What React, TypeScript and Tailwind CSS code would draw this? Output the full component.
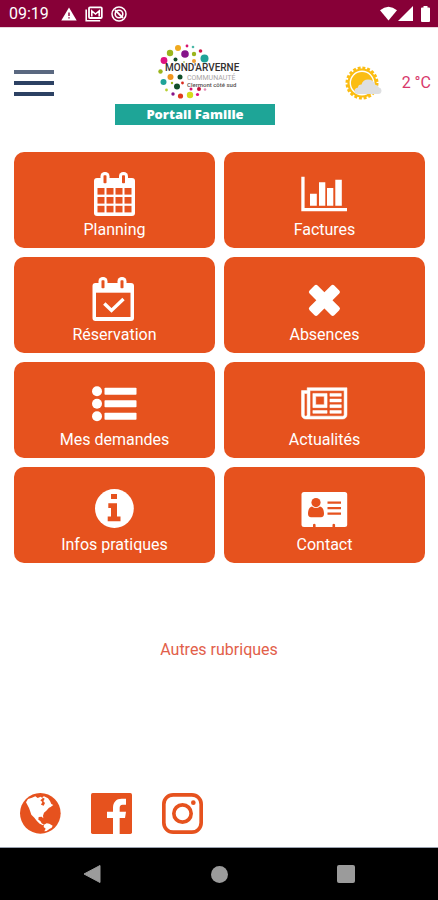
import type { ReactNode } from "react";

interface Tile {
  label: string;
  icon: ReactNode;
}

const ORANGE = "#e6521e";

// x, y, radius, colour of the confetti around the logo name
const dots: [number, number, number, string][] = [
  [63, 4, 3, "#f0a91e"],
  [72, 2, 1.4, "#d6136f"],
  [78, 3, 1.3, "#4cb8a8"],
  [55, 9, 3.2, "#9ab51c"],
  [70, 10, 3.8, "#86148a"],
  [79, 10, 2.2, "#9ab51c"],
  [85.5, 7, 1.8, "#cf1846"],
  [89.5, 14.5, 4, "#1fa398"],
  [49, 16.5, 3.4, "#de1180"],
  [60.5, 15.5, 2, "#12502a"],
  [79, 17, 2, "#f0a036"],
  [69, 18, 1, "#b7cf72"],
  [45.5, 27.5, 2.2, "#9ab51c"],
  [55.5, 33, 3, "#f0961e"],
  [65, 33, 2.5, "#12502a"],
  [48.5, 38, 3, "#1fa398"],
  [57, 39, 1.2, "#9ab51c"],
  [67.5, 39, 1.4, "#d92a1e"],
  [62, 42.5, 3, "#12502a"],
  [76, 45, 1.5, "#d6136f"],
  [84, 45, 2, "#c4123a"],
  [90, 45.5, 1.3, "#e38cb4"],
  [51.5, 46, 1.4, "#b7cf32"],
  [58, 50, 1.7, "#86148a"],
  [65.5, 52, 2.6, "#e03a1e"],
  [75, 51, 3.2, "#d5dc1c"],
  [82.5, 50.5, 1.6, "#de1180"],
];

function TileIcon({ children }: { children: ReactNode }) {
  return (
    <svg viewBox="0 0 48 48" className="size-12" fill="white" aria-hidden="true">
      {children}
    </svg>
  );
}

function PlanningIcon() {
  return (
    <TileIcon>
      <rect x="3" y="8" width="41" height="38" rx="3" />
      <rect x="9.5" y="2" width="9" height="14" rx="4.2" />
      <rect x="28" y="2" width="9" height="14" rx="4.2" />
      <g fill={ORANGE}>
        <rect x="12.5" y="5.3" width="3" height="8" rx="0.8" />
        <rect x="31" y="5.3" width="3" height="8" rx="0.8" />
        {[18, 27, 35.8].map((y) =>
          [6.5, 15.5, 24.5, 33.5].map((x) => <rect key={`${x}-${y}`} x={x} y={y} width="7" height="6.6" />)
        )}
      </g>
    </TileIcon>
  );
}

function ReservationIcon() {
  return (
    <TileIcon>
      <rect x="1.5" y="8" width="41.5" height="38" rx="3" />
      <rect x="7.5" y="2" width="9" height="14" rx="4.2" />
      <rect x="26.5" y="2" width="9" height="14" rx="4.2" />
      <g fill={ORANGE}>
        <rect x="10.5" y="5.3" width="3" height="8" rx="0.8" />
        <rect x="29.5" y="5.3" width="3" height="8" rx="0.8" />
        <rect x="5" y="17.7" width="34.5" height="24.3" />
      </g>
      <path d="M13.3 28.5l7.2 7L32.500 24" fill="none" stroke="white" strokeWidth="3.4" />
    </TileIcon>
  );
}

function FacturesIcon() {
  return (
    <TileIcon>
      <path d="M.3 6.7h3.3V38H46v3.3H.3z" />
      <path d="M9 23.7h6.800v12H9zM18 12.300h6.300v23.400H18zM26 18h6.300v17.700H26zM34.300 9.700h6.500v26h-6.500z" />
    </TileIcon>
  );
}

function AbsencesIcon() {
  return (
    <TileIcon>
      <g transform="translate(23.4 25.3)">
        <rect x="-17.5" y="-5.7" width="35" height="11.4" rx="2.2" transform="rotate(45)" />
        <rect x="-17.5" y="-5.7" width="35" height="11.4" rx="2.2" transform="rotate(-45)" />
      </g>
    </TileIcon>
  );
}

function DemandesIcon() {
  return (
    <TileIcon>
      {[11.3, 23.8, 36.3].map((y) => (
        <g key={y}>
          <circle cx="6" cy={y} r="5" />
          <rect x="13.5" y={y - 3.5} width="32" height="7" rx="0.8" />
        </g>
      ))}
    </TileIcon>
  );
}

function ActualitesIcon() {
  return (
    <TileIcon>
      <path
        transform="translate(.5 39) scale(.0222 -.0222)"
        d="M1024 1024h-384v-384h384v384zM1152 384v-128h-640v128h640zM1152 1152v-640h-640v640h640zM1792 384v-128h-512v128h512zM1792 640v-128h-512v128h512zM1792 896v-128h-512v128h512zM1792 1152v-128h-512v128h512zM256 192v960h-128v-960q0 -26 19 -45t45 -19t45 19t19 45zM1920 192v1088h-1536v-1088q0 -33 -11 -64h1483q26 0 45 19t19 45zM2048 1408v-1216q0 -80 -56 -136t-136 -56h-1664q-80 0 -136 56t-56 136v1088h256v128h1792z"
        fillRule="evenodd"
        stroke="white"
        strokeWidth="24"
      />
    </TileIcon>
  );
}

function InfosIcon() {
  return (
    <TileIcon>
      <circle cx="23.4" cy="23.5" r="19.4" />
      <path fill={ORANGE} d="M20 9h6v5h-6zM17.300 18.300H26v13.200h3.500v4.800H16.700v-4.800H20V23h-2.700z" />
    </TileIcon>
  );
}

function ContactIcon() {
  return (
    <TileIcon>
      <rect x=".5" y="7" width="45.700" height="35" rx="2.500" />
      <g fill={ORANGE}>
        <circle cx="15" cy="17.600" r="4.600" />
        <path d="M11 21.500q4 3 8 0c3 .4 4 4 4 7.300 0 2.200-1 3.500-3 3.500H10c-2 0-3-1.300-3-3.500 0-3.300 1-6.900 4-7.300z" />
        <path d="M26.500 16.500H40v2.200H26.500zM26.500 22H40v2.200H26.500zM26.500 27.500H40v2.200H26.500z" />
        <path d="M12 42v-2.500q1.300-1.400 2.600 0V42zM31.500 42v-2.500q1.300-1.400 2.600 0V42z" />
      </g>
    </TileIcon>
  );
}

const tiles: Tile[] = [
  { label: "Planning", icon: <PlanningIcon /> },
  { label: "Factures", icon: <FacturesIcon /> },
  { label: "Réservation", icon: <ReservationIcon /> },
  { label: "Absences", icon: <AbsencesIcon /> },
  { label: "Mes demandes", icon: <DemandesIcon /> },
  { label: "Actualités", icon: <ActualitesIcon /> },
  { label: "Infos pratiques", icon: <InfosIcon /> },
  { label: "Contact", icon: <ContactIcon /> },
];

function StatusBar() {
  return (
    <div className="flex h-7 items-center border-b border-[#e9d3db] bg-[#870037] pr-2 pl-[9px] text-white">
      <span className="text-base leading-5">09:19</span>
      <svg viewBox="0 0 16 14" className="ml-3 h-3.5 w-4" aria-hidden="true">
        <path d="M8 .5L15.700 13.500H.3z" fill="white" />
        <path d="M7.300 5.500h1.400v3.500H7.300zM7.300 10.200h1.400v1.400H7.300z" fill="#870037" />
      </svg>
      <svg viewBox="0 0 18 16" className="ml-2 h-4 w-[18px]" fill="none" stroke="white" aria-hidden="true">
        <path d="M1.200 3.500v11.300h14" strokeWidth="1.600" />
        <rect x="4" y="1.300" width="12.800" height="10.700" rx="1" strokeWidth="1.800" />
        <path d="M6.800 10.500V5l3.700 3 3.700-3v5.500" strokeWidth="1.600" />
      </svg>
      <svg viewBox="0 0 16 16" className="ml-2 size-4" fill="none" stroke="white" aria-hidden="true">
        <circle cx="8" cy="8" r="7" strokeWidth="1.500" />
        <circle cx="8" cy="8" r="3.800" strokeWidth="1.600" />
        <path d="M4 4l8 8" strokeWidth="1.800" />
      </svg>
      <div className="ml-auto flex items-center">
        <svg viewBox="0 0 17 15" className="h-[15px] w-[17px]" fill="white" aria-hidden="true">
          <path d="M8.500 14.500L0 4.200Q8.500-2.800 17 4.200z" />
        </svg>
        <svg viewBox="0 0 15 15" className="ml-px size-[15px]" fill="white" aria-hidden="true">
          <path d="M15 0v15H0z" />
        </svg>
        <svg viewBox="0 0 9 16" className="ml-2 h-4 w-[9px]" fill="white" aria-hidden="true">
          <path d="M2.500 0h4v1.500H8q1 0 1 1V15q0 1-1 1H1q-1 0-1-1V2.500q0-1 1-1h1.500z" />
        </svg>
      </div>
    </div>
  );
}

function Logo() {
  return (
    <div className="w-40">
      <svg viewBox="0 0 160 56" className="h-14 w-40" role="img" aria-label="Mond'Arverne Communauté">
        {dots.map(([x, y, r, color]) => (
          <circle key={`${x}-${y}`} cx={x} cy={y} r={r} fill={color} />
        ))}
        <g fontFamily="Roboto, sans-serif">
          <text x="50" y="27" fontSize="10" fontWeight="500" fill="#33302f">
            MOND'ARVERNE
          </text>
          <text x="72" y="36" fontSize="7" fill="#aaa6a6">
            COMMUNAUTÉ
          </text>
          <text x="72" y="43" fontSize="6" fontWeight="500" fill="#55504f">
            Clermont côté sud
          </text>
        </g>
      </svg>
      <p className="mt-1 bg-[#1ea597] text-center font-['Noto_Sans'] text-[13px] leading-[21px] font-black text-white">
        Portail Famille
      </p>
    </div>
  );
}

function Weather() {
  return (
    <div className="ml-auto flex items-center pb-1">
      <svg viewBox="0 0 38 34" className="h-[34px] w-[38px]" aria-hidden="true">
        <circle cx="18" cy="17" r="15" fill="none" stroke="#fbbd13" strokeWidth="3" strokeDasharray="2.900 1.810" />
        <circle cx="18" cy="17" r="13.500" fill="none" stroke="#fbbd13" strokeWidth="2.200" />
        <circle cx="18" cy="17" r="11" fill="#fbbd13" />
        <path
          d="M14 28q-3.500 0-3.500-3t3.500-3.500q0-3 3.500-3 1.500-5 6.500-5 5.500 0 7.500 5.500 2.500-.2 3.500 2.500 2.500.5 2.500 3 0 3.500-3.500 3.500z"
          fill="#dedfe1"
        />
      </svg>
      <span className="ml-5 text-base text-[#d8386b]">2 °C</span>
    </div>
  );
}

function SocialLinks() {
  return (
    <div className="flex gap-[30px] px-5 pb-[13px]">
      <a href="#site" aria-label="Site web">
        <svg viewBox="0 0 123 123" className="size-[41px]" aria-hidden="true">
          <circle cx="61" cy="61" r="61" fill={ORANGE} />
          <g fill="white">
            <path d="M18 28l6-10 12-4 10-4 7 5 9-4 6 5-7 6 6 5-4 8 8 3 4-8-5-5 4-8-8-4 6-3 12 6 6 8 4 9 6 3-8 6-5 2-8 9-7 6-3 9 1 8-5-5-9 1-1 8 6 4 4 7 7 4-3 2-10-5-9-9-7-9-9-9-4-12-3-8z" />
            <path d="M72 95l8-4 8 1 10 6-3 6-7 4-8 6-7 1 4-8-6-5z" />
          </g>
        </svg>
      </a>
      <a href="#facebook" aria-label="Facebook">
        <svg viewBox="0 0 123 123" className="size-[41px]" aria-hidden="true">
          <rect width="123" height="123" rx="5" fill={ORANGE} />
          <path d="M66 123V75H48V56h18V44c0-17 10-27 26-27h13v18H95c-7 0-9 4-9 10v11h19l-3 19H86v48z" fill="white" />
        </svg>
      </a>
      <a href="#instagram" aria-label="Instagram">
        <svg viewBox="0 0 123 123" className="size-[41px]" fill="none" stroke={ORANGE} aria-hidden="true">
          <rect x="5.500" y="5.500" width="112" height="112" rx="28" strokeWidth="11" />
          <circle cx="61.500" cy="61.500" r="26" strokeWidth="11" />
          <circle cx="94" cy="29" r="7" fill={ORANGE} stroke="none" />
        </svg>
      </a>
    </div>
  );
}

function NavBar() {
  return (
    <nav className="flex h-[53px] items-center justify-between border-t border-gray-400 bg-black px-[83px]">
      <button type="button" aria-label="Retour">
        <svg viewBox="0 0 18 20" className="h-5 w-[18px]" aria-hidden="true">
          <path d="M1 10L17 1.500v17z" fill="#9b9b9b" stroke="#9b9b9b" strokeLinejoin="round" />
        </svg>
      </button>
      <button type="button" aria-label="Accueil" className="size-[17px] rounded-full bg-[#9b9b9b]" />
      <button type="button" aria-label="Applications" className="size-[18px] rounded-xs bg-[#9b9b9b]" />
    </nav>
  );
}

export default function App() {
  return (
    <div className="flex min-h-screen flex-col bg-white font-[Roboto,sans-serif]">
      <StatusBar />
      <header className="flex items-center pt-4 pr-[7px] pl-3.5">
        <button type="button" aria-label="Menu" className="flex w-10 flex-col gap-[7px] pb-1">
          <span className="h-1 w-full bg-[#5a6880]" />
          <span className="h-1 w-full bg-[#2c4163]" />
          <span className="h-1 w-full bg-[#2c4163]" />
        </button>
        <div className="ml-[61px]">
          <Logo />
        </div>
        <Weather />
      </header>

      <main className="flex flex-1 flex-col pt-[27px]">
        <div className="grid grid-cols-2 gap-[9px] pr-[13px] pl-3.5">
          {tiles.map((tile) => (
            <button
              key={tile.label}
              type="button"
              className="flex h-24 flex-col items-center rounded-[10px] bg-[#e6521e] pt-[18px] text-base leading-6 text-white"
            >
              {tile.icon}
              <span>{tile.label}</span>
            </button>
          ))}
        </div>
        <a href="#rubriques" className="mx-auto mt-[75px] text-base text-[#e2604a]">
          Autres rubriques
        </a>
      </main>

      <SocialLinks />
      <NavBar />
    </div>
  );
}
